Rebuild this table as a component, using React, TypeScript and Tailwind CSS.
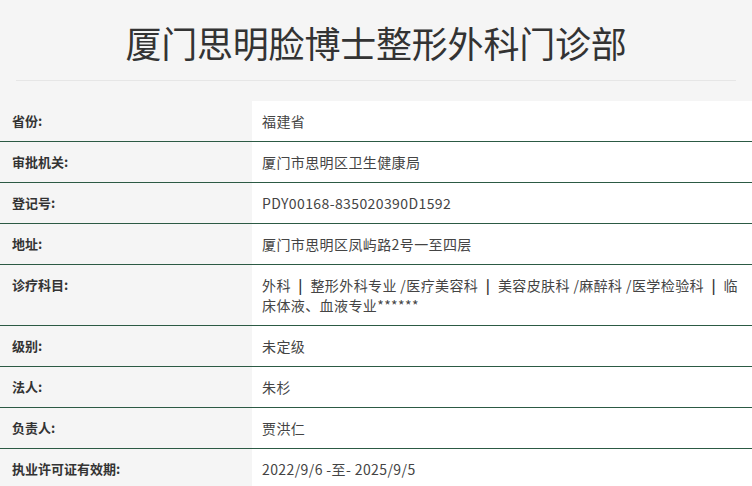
const rows: { label: string; value: React.ReactNode }[] = [
  { label: "省份:", value: "福建省" },
  { label: "审批机关:", value: "厦门市思明区卫生健康局" },
  { label: "登记号:", value: "PDY00168-835020390D1592" },
  { label: "地址:", value: "厦门市思明区凤屿路2号一至四层" },
  {
    label: "诊疗科目:",
    value: (
      <>
        外科 <Bar /> 整形外科专业 /医疗美容科 <Bar /> 美容皮肤科 /麻醉科 /医学检验科 <Bar /> 临床体液、血液专业******
      </>
    ),
  },
  { label: "级别:", value: "未定级" },
  { label: "法人:", value: "朱杉" },
  { label: "负责人:", value: "贾洪仁" },
  { label: "执业许可证有效期:", value: "2022/9/6 -至- 2025/9/5" },
];

function Bar() {
  return <span className="px-[4px] font-bold text-[#333]">|</span>;
}

export default function App() {
  return (
    <div
      className="min-h-[486px] w-[752px] overflow-hidden bg-[#f5f5f5] text-[#333]"
      style={{ fontFamily: '"Noto Sans CJK SC", "Noto Sans", sans-serif' }}
    >
      <div className="px-4">
        <h1 className="border-b border-[#e6e6e6] pt-[18px] pb-[14px] text-center text-[36px] leading-[48px] font-normal tracking-[-0.2px] text-[#333]">
          厦门思明脸博士整形外科门诊部
        </h1>
      </div>
      <div className="mt-5">
        {rows.map((r, i) => (
          <div
            key={r.label}
            className={`flex ${i > 0 ? "border-t border-[#2c5a44]" : ""}`}
          >
            <div className="w-[252px] shrink-0 px-3 py-[10px] text-[13px] leading-5 font-bold text-[#333]">
              {r.label}
            </div>
            <div className="flex-1 bg-white py-[10px] pr-2 pl-[10px] text-[14px] leading-5 tracking-[0.4px] text-[#444]">
              {r.value}
            </div>
          </div>
        ))}
      </div>
    </div>
  );
}
